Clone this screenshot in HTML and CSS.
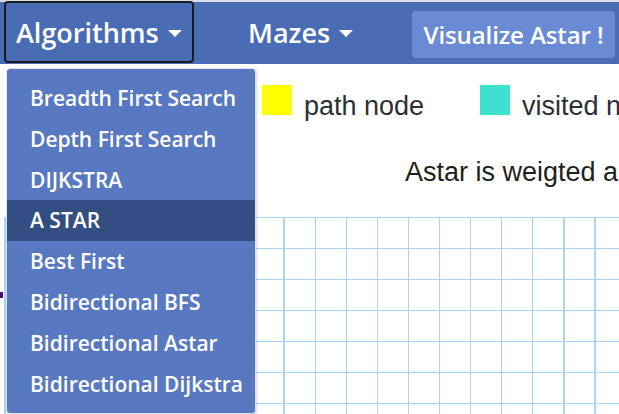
FILE: index.html
```html
<!DOCTYPE html>
<html>
<head>
<meta charset="utf-8">
<link rel="stylesheet" href="styles.css">
</head>
<body>
<nav class="navbar">
  <div class="nav-item">
    <button class="nav-toggle active-toggle">Algorithms<span class="caret"></span></button>
    <ul class="dropdown">
      <li>Breadth First Search</li>
      <li>Depth First Search</li>
      <li>DIJKSTRA</li>
      <li class="selected">A STAR</li>
      <li>Best First</li>
      <li>Bidirectional BFS</li>
      <li>Bidirectional Astar</li>
      <li>Bidirectional Dijkstra</li>
    </ul>
  </div>
  <div class="nav-item">
    <button class="nav-toggle mazes">Mazes<span class="caret"></span></button>
  </div>
  <button class="visualize">Visualize Astar !</button>
</nav>
<main class="content">
  <div class="legend">
    <div class="legend-item"><span class="swatch path"></span>path node</div>
    <div class="legend-item"><span class="swatch visited"></span>visited node</div>
  </div>
  <p class="info">Astar is weigted and guarantees the shortest path!</p>
  <div class="grid-wrap">
    <span class="start-node"></span>
    <div class="grid"></div>
  </div>
</main>
</body>
</html>
```
FILE: styles.css
```css
html, body {
  margin: 0;
  padding: 0;
  width: 619px;
  height: 414px;
  overflow: hidden;
  background: #ffffff;
}
body {
  font-family: "Open Sans", "Noto Sans", sans-serif;
}
.navbar {
  display: flex;
  align-items: center;
  height: 62px;
  border-top: 2px solid #d9dde4;
  background: #4a6cb4;
  padding-left: 4px;
  box-sizing: content-box;
}
.nav-item {
  position: relative;
}
.nav-toggle {
  display: flex;
  align-items: center;
  gap: 9px;
  font-family: inherit;
  font-size: 27px;
  font-weight: 600;
  color: #ffffff;
  background: transparent;
  border: 2px solid transparent;
  border-radius: 4px;
  height: 62px;
  padding: 0 10px 0 10px;
  margin-top: -2px;
  cursor: pointer;
  white-space: nowrap;
}
.active-toggle {
  width: 190px;
  border-color: #1b1b1b;
}
.mazes {
  margin-left: 44px;
  padding-left: 8px;
}
.caret {
  width: 0;
  height: 0;
  border-left: 7px solid transparent;
  border-right: 7px solid transparent;
  border-top: 7px solid #ffffff;
  margin-top: 2px;
}
.visualize {
  margin-left: auto;
  margin-right: 4px;
  height: 47px;
  width: 203px;
  margin-top: 3px;
  background: #6a8bd4;
  color: #ffffff;
  border: none;
  border-radius: 4px;
  font-family: inherit;
  font-size: 24px;
  font-weight: 600;
  letter-spacing: -0.1px;
  padding: 0;
  white-space: nowrap;
}
.dropdown {
  position: absolute;
  top: 65px;
  left: 2px;
  z-index: 10;
  margin: 0;
  padding: 9px 0;
  list-style: none;
  width: 248px;
  background: #5878c1;
  border: 1px solid #dde3ee;
  border-radius: 4px;
  box-shadow: 1px 1px 2px rgba(0,0,0,0.15);
}
.dropdown li {
  height: 40.8px;
  line-height: 40.8px;
  padding-left: 23px;
  color: #ffffff;
  font-size: 21px;
  font-weight: 600;
  white-space: nowrap;
}
.dropdown li.selected {
  background: #324e82;
}
.content {
  position: relative;
}
.legend {
  display: flex;
  padding-left: 262px;
  margin-top: 21px;
  font-family: "Liberation Sans", Arial, sans-serif;
  font-size: 27px;
  color: #2c2f33;
  white-space: nowrap;
}
.legend-item {
  display: flex;
  align-items: baseline;
  gap: 12px;
  width: 218px;
  flex-shrink: 0;
}
.swatch {
  display: inline-block;
  width: 30px;
  height: 30px;
}
.swatch.path { background: #ffff00; }
.swatch.visited { background: #40e0d0; }
.info {
  margin: 0;
  margin-top: 35px;
  padding-left: 405px;
  font-family: "Liberation Sans", Arial, sans-serif;
  font-size: 27px;
  color: #1f1f1f;
  white-space: nowrap;
}
.grid-wrap {
  position: relative;
  margin-top: 29px;
  height: 200px;
  overflow: hidden;
}
.grid {
  margin-left: 4px;
  height: 200px;
  width: 615px;
  background-image:
    repeating-linear-gradient(to right, #a9d4f5 0, #a9d4f5 1.6px, transparent 1.6px, transparent 31.05px),
    repeating-linear-gradient(to bottom, #a9d4f5 0, #a9d4f5 1px, transparent 1px, transparent 31px);
}
.start-node {
  position: absolute;
  left: 0;
  top: 75px;
  width: 3px;
  height: 6px;
  background: #4a0a6e;
}
```
